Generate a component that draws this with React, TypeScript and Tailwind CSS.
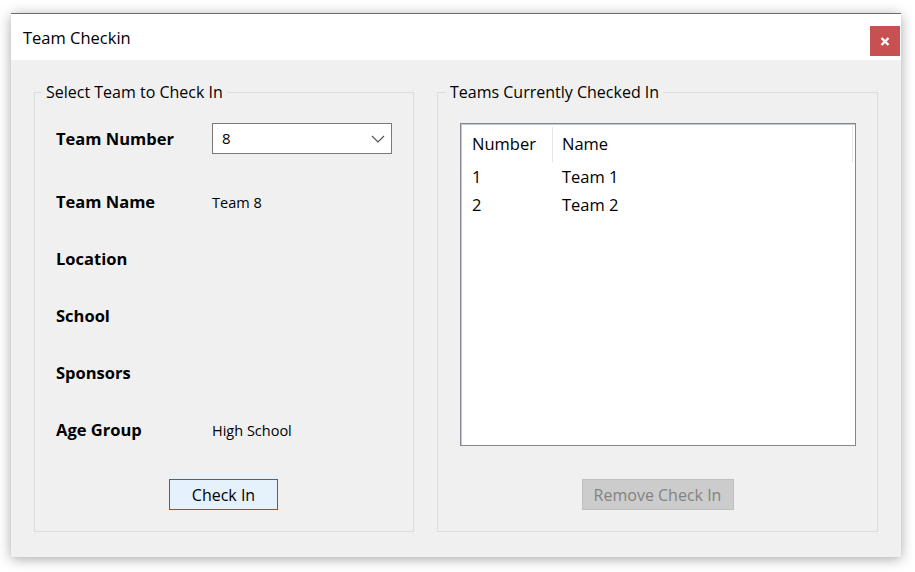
import React from 'react'

type Team = { number: number; name: string }

const checkedIn: Team[] = [
  { number: 1, name: 'Team 1' },
  { number: 2, name: 'Team 2' },
]

const details: { label: string; value?: string }[] = [
  { label: 'Team Name', value: 'Team 8' },
  { label: 'Location' },
  { label: 'School' },
  { label: 'Sponsors' },
  { label: 'Age Group', value: 'High School' },
]

function CloseButton() {
  return (
    <button className="w-[30px] h-[30px] bg-[#c75050] flex items-center justify-center">
      <svg width="10" height="9" viewBox="0 0 10 9">
        <path d="M1.5 1 L8.5 8 M8.5 1 L1.5 8" stroke="white" strokeWidth="2.4" />
      </svg>
    </button>
  )
}

function Chevron() {
  return (
    <svg width="14" height="8" viewBox="0 0 14 8">
      <path d="M1 1 L7 7 L13 1" fill="none" stroke="#555" strokeWidth="1.2" />
    </svg>
  )
}

export default function App() {
  return (
    <div className="w-[915px] h-[572px] bg-white pt-[13px] pl-[11px] text-black" style={{ fontFamily: '"Open Sans", "Noto Sans", sans-serif' }}>
      <div className="w-[890px] h-[544px] flex flex-col border-t border-[#6a6a6a] shadow-[0_2px_12px_rgba(0,0,0,0.35)]">
        {/* title bar */}
        <div className="h-[46px] bg-white flex items-start justify-between">
          <div className="pl-[12px] pt-[13px] text-[16.5px] leading-[22px]">Team Checkin</div>
          <div className="pt-[12px] pr-[1px]">
            <CloseButton />
          </div>
        </div>

        {/* body */}
        <div className="flex-1 bg-[#f0f0f0] flex gap-[23px] px-[23px] pt-[22px] pb-[25px]">
          <fieldset className="w-[380px] border border-[#dcdcdc] flex flex-col">
            <legend className="ml-[7px] px-[4px] text-[16px] leading-[21px]">Select Team to Check In</legend>

            <div className="mt-[20px] pl-[21px] flex items-center">
              <div className="w-[156px] text-[16.5px] font-bold pt-[1px]">Team Number</div>
              <div className="w-[180px] h-[31px] bg-white border border-[#7a7a7a] flex items-center justify-between pl-[9px] pr-[6px]">
                <span className="text-[15px]">8</span>
                <Chevron />
              </div>
            </div>

            <div className="mt-[20px] pl-[21px] flex flex-col">
              {details.map(d => (
                <div key={d.label} className="h-[57px] flex items-center">
                  <div className="w-[156px] text-[16.5px] font-bold">{d.label}</div>
                  <div className="text-[14.5px]">{d.value}</div>
                </div>
              ))}
            </div>

            <div className="mt-[20px] pl-[134px] flex">
              <button className="w-[109px] h-[31px] border border-[#0078d7] bg-[#e5f1fb] text-[16px]">Check In</button>
            </div>
          </fieldset>

          <fieldset className="flex-1 border border-[#dcdcdc] flex flex-col">
            <legend className="ml-[8px] px-[4px] text-[16px] leading-[21px]">Teams Currently Checked In</legend>

            <div className="mt-[20px] ml-[22px] mr-[21px] h-[323px] bg-white border border-[#828790] shadow-[inset_1px_1px_0_#c4c7cc]">
              <div className="h-[39px] flex items-center text-[16.5px] pt-[1px]">
                <div className="w-[91px] pl-[11px]">Number</div>
                <div className="w-px h-[35px] bg-[#e5e5e5]" />
                <div className="w-[299px] pl-[9px]">Name</div>
                <div className="w-px h-[37px] bg-[#e5e5e5]" />
              </div>
              {checkedIn.map(t => (
                <div key={t.number} className="h-[28px] flex items-center text-[16.5px]">
                  <div className="w-[92px] pl-[11px]">{t.number}</div>
                  <div className="pl-[9px]">{t.name}</div>
                </div>
              ))}
            </div>

            <div className="mt-[33px] flex justify-center">
              <button className="w-[152px] h-[31px] border border-[#bfbfbf] bg-[#cccccc] text-[#838383] text-[16px]">Remove Check In</button>
            </div>
          </fieldset>
        </div>
      </div>
    </div>
  )
}
